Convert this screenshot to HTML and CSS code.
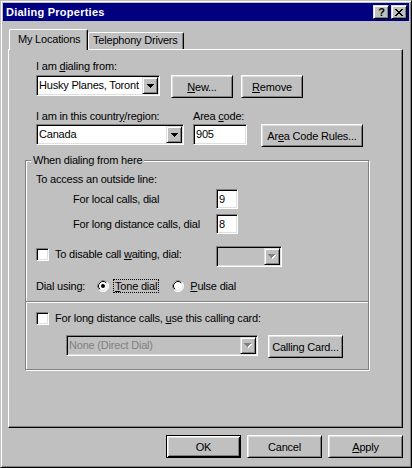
FILE: index.html
```html
<!DOCTYPE html>
<html>
<head>
<meta charset="utf-8">
<title>Dialing Properties</title>
<link rel="stylesheet" href="styles.css">
</head>
<body>
<div class="window">
  <div class="titlebar">
    <span class="title">Dialing Properties</span>
    <div class="caps">
      <span class="capbtn help">?</span>
      <span class="capbtn close">
        <svg width="8" height="7" viewBox="0 0 8 7" shape-rendering="crispEdges">
          <path fill="#000" d="M0 0h2v1h-2zM6 0h2v1h-2zM1 1h2v1h-2zM5 1h2v1h-2zM2 2h4v1h-4zM3 3h2v1h-2zM2 4h4v1h-4zM1 5h2v1h-2zM5 5h2v1h-2zM0 6h2v1h-2zM6 6h2v1h-2z"/>
        </svg>
      </span>
    </div>
  </div>

  <div class="client">
    <div class="tabs">
      <div class="tab active">My Locations</div>
      <div class="tab">Telephony Drivers</div>
    </div>

    <div class="panel">
      <div class="row r1">
        <div class="field">
          <div class="lbl">I am <u>d</u>ialing from:</div>
          <div class="combo c-from">
            <span class="ctext">Husky Planes, Toront</span>
            <span class="drop"><svg width="7" height="4" viewBox="0 0 7 4" shape-rendering="crispEdges"><path fill="#000" d="M0 0h7v1h-7zM1 1h5v1h-5zM2 2h3v1h-3zM3 3h1v1h-1z"/></svg></span>
          </div>
        </div>
        <button class="btn b-new"><u>N</u>ew...</button>
        <button class="btn b-remove"><u>R</u>emove</button>
      </div>

      <div class="row r2">
        <div class="field">
          <div class="lbl">I am in this countr<u>y</u>/region:</div>
          <div class="combo c-country">
            <span class="ctext">Canada</span>
            <span class="drop"><svg width="7" height="4" viewBox="0 0 7 4" shape-rendering="crispEdges"><path fill="#000" d="M0 0h7v1h-7zM1 1h5v1h-5zM2 2h3v1h-3zM3 3h1v1h-1z"/></svg></span>
          </div>
        </div>
        <div class="field f-area">
          <div class="lbl">Area <u>c</u>ode:</div>
          <div class="edit e-area">905</div>
        </div>
        <button class="btn b-rules">Ar<u>e</u>a Code Rules...</button>
      </div>

      <fieldset class="group">
        <legend class="legend">When dialing from here</legend>
        <div class="line">To access an outside line:</div>
        <div class="dialrow d-local">
          <span class="dlabel">For local calls, dial</span>
          <div class="edit e-num">9</div>
        </div>
        <div class="dialrow d-long">
          <span class="dlabel">For long distance calls, dial</span>
          <div class="edit e-num">8</div>
        </div>
        <div class="chkrow r-wait">
          <div class="chkleft">
            <span class="checkbox"></span>
            <span class="chklabel">To disable call <u>w</u>aiting, dial:</span>
          </div>
          <div class="combo disabled c-wait">
            <span class="ctext"></span>
            <span class="drop"><svg width="8" height="5" viewBox="0 0 8 5" shape-rendering="crispEdges"><path fill="#fff" d="M1 1h7v1h-7zM2 2h5v1h-5zM3 3h3v1h-3zM4 4h1v1h-1z"/><path fill="#808080" d="M0 0h7v1h-7zM1 1h5v1h-5zM2 2h3v1h-3zM3 3h1v1h-1z"/></svg></span>
          </div>
        </div>
        <div class="radiorow">
          <span class="dialusing">Dial using:</span>
          <svg class="radio" width="12" height="12" viewBox="0 0 12 12">
            <circle cx="6" cy="6" r="5.5" fill="#fff" stroke="#fff"/>
            <path d="M2.11 9.89A5.5 5.5 0 0 1 9.89 2.11" fill="none" stroke="#808080"/>
            <circle cx="6" cy="6" r="4.5" fill="#fff" stroke="#dfdfdf"/>
            <path d="M2.82 9.18A4.5 4.5 0 0 1 9.18 2.82" fill="none" stroke="#000"/>
            <circle cx="6" cy="6" r="2" fill="#000"/>
          </svg>
          <span class="rlabel focus"><u>T</u>one dial</span>
          <svg class="radio r-pulse" width="12" height="12" viewBox="0 0 12 12">
            <circle cx="6" cy="6" r="5.5" fill="#fff" stroke="#fff"/>
            <path d="M2.11 9.89A5.5 5.5 0 0 1 9.89 2.11" fill="none" stroke="#808080"/>
            <circle cx="6" cy="6" r="4.5" fill="#fff" stroke="#dfdfdf"/>
            <path d="M2.82 9.18A4.5 4.5 0 0 1 9.18 2.82" fill="none" stroke="#000"/>
          </svg>
          <span class="rlabel"><u>P</u>ulse dial</span>
        </div>
        <div class="separator"></div>
        <div class="chkrow r-card">
          <div class="chkleft">
            <span class="checkbox"></span>
            <span class="chklabel">For long distance calls, <u>u</u>se this calling card:</span>
          </div>
        </div>
        <div class="row r-cardsel">
          <div class="combo disabled c-card">
            <span class="ctext gray">None (Direct Dial)</span>
            <span class="drop"><svg width="8" height="5" viewBox="0 0 8 5" shape-rendering="crispEdges"><path fill="#fff" d="M1 1h7v1h-7zM2 2h5v1h-5zM3 3h3v1h-3zM4 4h1v1h-1z"/><path fill="#808080" d="M0 0h7v1h-7zM1 1h5v1h-5zM2 2h3v1h-3zM3 3h1v1h-1z"/></svg></span>
          </div>
          <button class="btn b-card">Calling Card...</button>
        </div>
      </fieldset>
    </div>

    <div class="buttons">
      <button class="btn dlg default">OK</button>
      <button class="btn dlg">Cancel</button>
      <button class="btn dlg"><u>A</u>pply</button>
    </div>
  </div>
</div>
</body>
</html>
```

FILE: styles.css
```css
* { box-sizing: border-box; }
html, body { margin: 0; padding: 0; }
body {
  width: 412px;
  height: 468px;
  overflow: hidden;
  background: #c0c0c0;
  font-family: "Liberation Sans", Arial, sans-serif;
  font-size: 11px;
  letter-spacing: -0.2px;
  color: #000;
}
u { text-underline-offset: 1px; }

.window {
  width: 412px;
  height: 468px;
  border: 1px solid;
  border-color: #c0c0c0 #000 #000 #c0c0c0;
  box-shadow: inset 1px 1px #fff, inset -1px -1px #808080;
  padding: 2px;
  background: #c0c0c0;
  display: flex;
  flex-direction: column;
}

/* title bar */
.titlebar {
  height: 18px;
  background: #000080;
  color: #fff;
  display: flex;
  align-items: center;
  padding: 0 2px 0 3px;
}
.title {
  flex: 1;
  font-weight: bold;
  line-height: 18px;
  letter-spacing: 0.25px;
}
.caps { display: flex; gap: 2px; }
.capbtn {
  width: 16px;
  height: 14px;
  background: #c0c0c0;
  border: 1px solid;
  border-color: #dfdfdf #000 #000 #dfdfdf;
  box-shadow: inset 1px 1px #fff, inset -1px -1px #808080;
  display: flex;
  align-items: center;
  justify-content: center;
  color: #000;
}
.help {
  font-weight: bold;
  font-size: 11px;
  line-height: 12px;
  letter-spacing: 0;
  padding-left: 1px;
}
.close svg { display: block; margin-left: -1px; }

/* client */
.client {
  flex: 1;
  padding: 8px 6px 0 5px;
  display: flex;
  flex-direction: column;
}

.tabs {
  display: flex;
  align-items: flex-end;
  height: 20px;
}
.tab {
  height: 17px;
  border-top: 1px solid #fff;
  border-left: 1px solid #fff;
  border-right: 1px solid #000;
  box-shadow: inset -1px 0 #808080;
  border-radius: 2px 2px 0 0;
  padding: 1px 0 0 4px;
  line-height: 13px;
  white-space: nowrap;
  width: 96px;
  background: #c0c0c0;
}
.tab.active {
  position: relative;
  z-index: 1;
  height: 21px;
  margin-bottom: -1px;
  margin-left: 1px;
  width: 79px;
  padding: 3px 0 0 8px;
}

.panel {
  height: 379px;
  border: 1px solid;
  border-color: #fff #000 #000 #fff;
  box-shadow: inset -1px -1px #808080;
  padding: 10px 0 0 16px;
}

.row { display: flex; align-items: flex-start; }
.field { display: flex; flex-direction: column; }
.lbl { line-height: 13px; white-space: nowrap; }

.r1 { margin-left: 11px; }
.r1 .combo { margin-top: 2px; }
.r2 { margin-left: 11px; margin-top: 12px; }
.r2 .combo, .r2 .edit { margin-top: 1px; }

/* sunken controls */
.combo, .edit {
  height: 21px;
  border: 1px solid;
  border-color: #808080 #fff #fff #808080;
  box-shadow: inset 1px 1px #000, inset -1px -1px #dfdfdf;
  background: #fff;
  padding: 1px;
}
.combo { display: flex; }
.ctext {
  flex: 1;
  overflow: hidden;
  white-space: nowrap;
  line-height: 17px;
  padding-left: 1px;
}
.ctext.gray { color: #808080; }
.drop {
  width: 16px;
  height: 17px;
  flex: none;
  background: #c0c0c0;
  border: 1px solid;
  border-color: #dfdfdf #000 #000 #dfdfdf;
  box-shadow: inset 1px 1px #fff, inset -1px -1px #808080;
  display: flex;
  align-items: center;
  justify-content: center;
}
.drop svg { display: block; }
.combo.disabled { background: #c0c0c0; }
.edit { line-height: 17px; padding-left: 2px; }

.c-from { width: 124px; }
.c-country { width: 148px; }
.f-area { margin-left: 9px; }
.e-area { width: 54px; }
.c-wait { width: 66px; }
.c-card { width: 192px; margin-left: 40px; }

/* buttons */
.btn {
  font-family: inherit;
  font-size: 11px;
  letter-spacing: -0.2px;
  color: #000;
  background: #c0c0c0;
  height: 23px;
  padding: 0;
  border: 1px solid;
  border-color: #fff #000 #000 #fff;
  box-shadow: inset 1px 1px #dfdfdf, inset -1px -1px #808080;
  border-radius: 0;
  white-space: nowrap;
}
.b-new { width: 62px; margin-left: 11px; margin-top: 15px; }
.b-remove { width: 62px; margin-left: 8px; margin-top: 15px; }
.b-rules { width: 102px; margin-left: 14px; margin-top: 14px; }
.b-card { width: 75px; margin-left: 10px; }

/* group box */
.group {
  margin: 7px 0 0 0;
  width: 344px;
  padding: 6px 0 11px 0;
  border: 1px solid #808080;
  box-shadow: 1px 1px 0 #fff, inset 1px 1px 0 #fff;
  min-width: 0;
}
.legend {
  margin-left: 5px;
  padding: 0 2px;
  line-height: 13px;
  background: #c0c0c0;
}
.line { margin-left: 10px; line-height: 13px; }

.dialrow { display: flex; align-items: center; height: 20px; }
.d-local { margin-top: 3px; }
.d-long { margin-top: 5px; }
.dlabel { margin-left: 47px; width: 143px; line-height: 13px; white-space: nowrap; }
.e-num { width: 22px; height: 20px; line-height: 16px; }

.chkrow { display: flex; align-items: flex-start; }
.r-wait { margin-top: 12px; }
.r-card { margin-top: 7px; }
.chkleft {
  display: flex;
  align-items: center;
  height: 17px;
  width: 180px;
  margin-left: 10px;
  white-space: nowrap;
}
.checkbox {
  width: 13px;
  height: 13px;
  flex: none;
  border: 1px solid;
  border-color: #808080 #fff #fff #808080;
  box-shadow: inset 1px 1px #000, inset -1px -1px #dfdfdf;
  background: #fff;
}
.chklabel { margin-left: 6px; line-height: 13px; }

.radiorow {
  display: flex;
  align-items: center;
  margin-top: 12px;
  margin-left: 10px;
  height: 14px;
}
.dialusing { width: 61px; line-height: 13px; }
.radio { display: block; flex: none; }
.rlabel {
  margin-left: 4px;
  padding: 0 1px;
  line-height: 12px;
  border: 1px dotted transparent;
  white-space: nowrap;
}
.rlabel.focus { border-color: #000; }
.r-pulse { margin-left: 13px; }

.separator {
  margin-top: 8px;
  height: 2px;
  border-top: 1px solid #808080;
  border-bottom: 1px solid #fff;
}

.r-cardsel { margin-top: 8px; }

/* dialog buttons */
.buttons {
  display: flex;
  justify-content: flex-end;
  gap: 6px;
  margin-top: 7px;
}
.dlg { width: 75px; }
.btn.default {
  border-color: #000;
  box-shadow: inset 1px 1px #fff, inset -1px -1px #000, inset 2px 2px #dfdfdf, inset -2px -2px #808080;
}
```
